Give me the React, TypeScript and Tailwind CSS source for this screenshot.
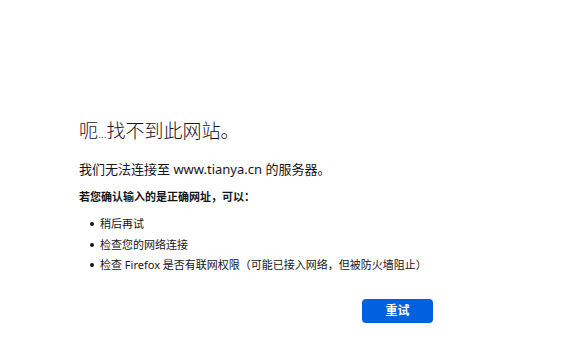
export default function App() {
  const items = [
    "稍后再试",
    "检查您的网络连接",
    "检查 Firefox 是否有联网权限（可能已接入网络，但被防火墙阻止）",
  ];

  return (
    <div className="h-[356px] w-[576px] bg-white text-[#15141a] font-['Noto_Sans','Noto_Sans_CJK_SC',sans-serif]">
      <div className="flex w-[354px] flex-col pl-[79px] pt-[118px] box-content">
        <h1 className="text-[19px] font-light leading-[26px]">
          呃<span className="font-['Open_Sans',sans-serif] text-[12px]">…</span>找不到此网站。
        </h1>
        <p className="mt-[12px] text-[13px] leading-[20px]">
          我们无法连接至 www.tianya.cn 的服务器。
        </p>
        <p className="mt-[8px] text-[11px] font-bold leading-[20px]">
          若您确认输入的是正确网址，可以：
        </p>
        <ul className="mt-[7px] flex flex-col">
          {items.map((t) => (
            <li key={t} className="flex items-center text-[11px] leading-[20.5px] whitespace-nowrap">
              <span className="ml-[11px] mr-[6px] h-[4px] w-[4px] shrink-0 rounded-full bg-[#15141a]" />
              {t}
            </li>
          ))}
        </ul>
        <div className="mt-[23px] flex justify-end">
          <button className="h-[24px] w-[71px] rounded-[4px] bg-[#0061e0] text-[12px] font-bold text-white">
            重试
          </button>
        </div>
      </div>
    </div>
  );
}
